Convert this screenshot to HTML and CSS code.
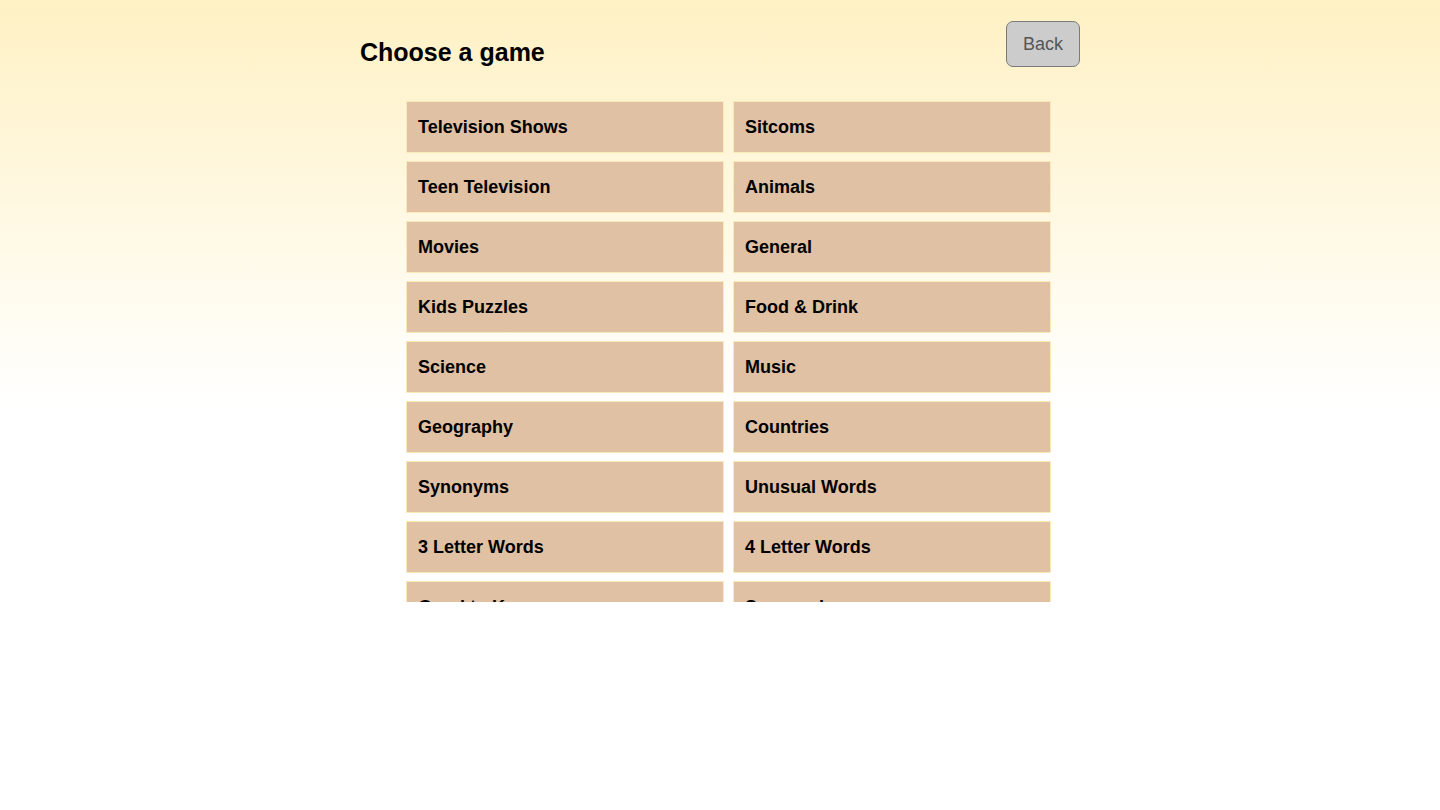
FILE: index.html
```html
<!DOCTYPE html>
<html lang="en">

<head>
  <meta name="viewport" content="width=device-width, initial-scale=1.0">
  <title>Choose a game</title>
  <link rel="stylesheet" href="styles.css">
</head>

<body>
  <main id="page-holder">
    <div id="top-bar">
      <h1 id="header">Choose a game</h1>
      <button type="button" class="back-button">Back</button>
    </div>

    <div id="game-list-holder">
      <div id="game-list">
        <button type="button" class="game-tile">Television Shows</button>
        <button type="button" class="game-tile">Sitcoms</button>
        <button type="button" class="game-tile">Teen Television</button>
        <button type="button" class="game-tile">Animals</button>
        <button type="button" class="game-tile">Movies</button>
        <button type="button" class="game-tile">General</button>
        <button type="button" class="game-tile">Kids Puzzles</button>
        <button type="button" class="game-tile">Food &amp; Drink</button>
        <button type="button" class="game-tile">Science</button>
        <button type="button" class="game-tile">Music</button>
        <button type="button" class="game-tile">Geography</button>
        <button type="button" class="game-tile">Countries</button>
        <button type="button" class="game-tile">Synonyms</button>
        <button type="button" class="game-tile">Unusual Words</button>
        <button type="button" class="game-tile">3 Letter Words</button>
        <button type="button" class="game-tile">4 Letter Words</button>
        <button type="button" class="game-tile">Good to Know</button>
        <button type="button" class="game-tile">Seasonal</button>
      </div>
    </div>
  </main>
</body>

</html>
```

FILE: styles.css
```css
html {
  height: 100%;
}

body {
  margin: 0;
  min-height: 100%;
  font-family: "Liberation Sans", Arial, Helvetica, sans-serif;
  background-color: white;
  background-image: linear-gradient(#fff1c4, #ffffff 410px);
  background-repeat: no-repeat;
}

#page-holder {
  width: 720px;
  margin: 0 auto;
}

#top-bar {
  display: flex;
  justify-content: space-between;
  align-items: flex-start;
  padding-top: 21px;
}

#header {
  margin: 16px 0 0 0;
  font-size: 25px;
  line-height: 30px;
  font-weight: bold;
  color: black;
}

.back-button {
  width: 74px;
  height: 46px;
  padding: 0;
  border: 1px solid #7a7a7a;
  border-radius: 7px;
  background-color: #cccccc;
  color: #555555;
  font-family: "Liberation Sans", Arial, Helvetica, sans-serif;
  font-size: 18px;
  cursor: pointer;
}

#game-list-holder {
  height: 501px;
  margin-top: 34px;
  overflow: hidden;
}

#game-list {
  display: grid;
  grid-template-columns: 318px 318px;
  column-gap: 9px;
  row-gap: 8px;
  margin-left: 46px;
}

.game-tile {
  height: 52px;
  padding: 0 0 0 11px;
  border: 1px solid #fbeab9;
  background-color: #e0c1a3;
  color: black;
  text-align: left;
  font-family: "Liberation Sans", Arial, Helvetica, sans-serif;
  font-size: 18px;
  font-weight: bold;
  cursor: pointer;
}
```
